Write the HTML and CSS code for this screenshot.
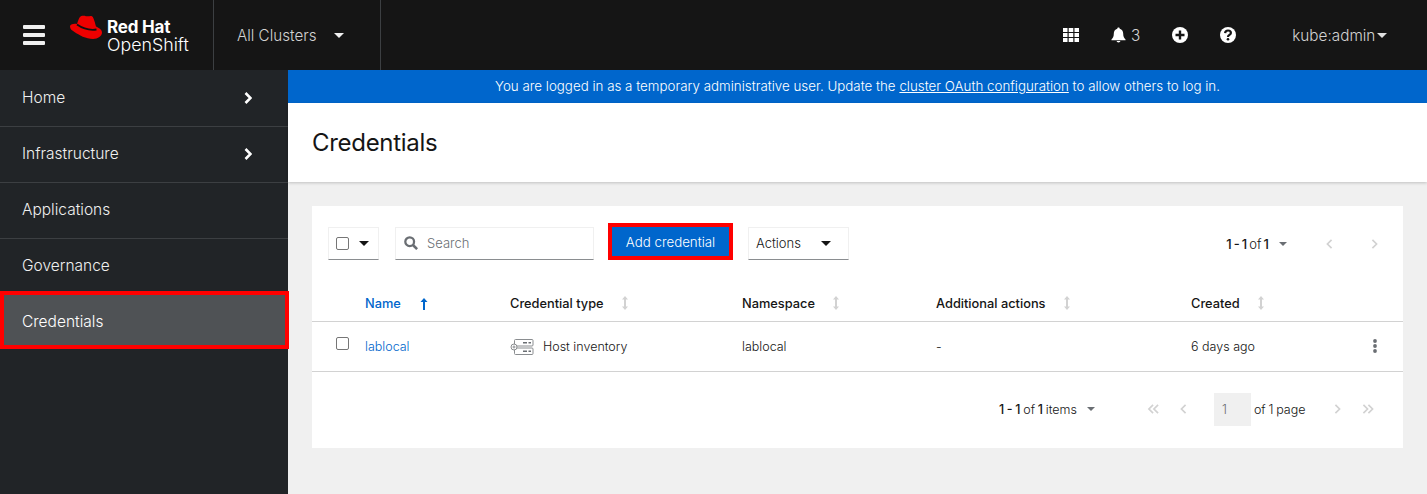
FILE: index.html
```html
<!DOCTYPE html>
<html lang="en">
<head>
<meta charset="utf-8">
<title>Credentials</title>
<link rel="stylesheet" href="styles.css">
</head>
<body>
<header class="masthead">
  <button class="burger" aria-label="Menu"><span></span><span></span><span></span></button>
  <div class="brand">
    <svg class="hat" viewBox="0 0 32 24" width="32" height="24"><path fill="#e00" d="M7 9C8 6 9 3 10 2c1-1.500 4-1.500 6-.8 2 .6 4-.7 5.500-.2 2 .6 3 5 4.500 10.500 3 1.500 6 3 6 6 0 3.500-4 6.500-9 6.500C16 24 9 20 4.500 17 2 15.500 0 14 0 11.500 0 9.500 3 8.500 7 9z"/><path fill="none" stroke="#111" stroke-width="1.800" d="M7 9.500c5 3.500 13 6 19.500 5"/></svg>
    <div class="brand-text"><b>Red Hat</b><span>OpenShift</span></div>
  </div>
  <div class="cluster"><span>All Clusters</span><i class="caret caret-lg"></i></div>
  <div class="tools">
    <svg class="grid-ico" viewBox="0 0 16 16" width="16" height="16"><path fill="#fff" d="M0 1h4.500v4H0zM5.700 1h4.600v4H5.700zM11.500 1H16v4h-4.500zM0 6h4.500v4H0zM5.700 6h4.600v4H5.700zM11.500 6H16v4h-4.500zM0 11h4.500v4H0zM5.700 11h4.600v4H5.700zM11.500 11H16v4h-4.500z"/></svg>
    <div class="bell"><svg viewBox="0 0 16 16" width="15" height="16"><path fill="#fff" d="M8 0c.8 0 1.300.5 1.300 1.200C11.800 1.800 13 4 13 6.500c0 3 .8 4.600 2.500 6.300v.9H.5v-.9C2.200 11.100 3 9.500 3 6.500 3 4 4.200 1.800 6.700 1.200 6.700.5 7.200 0 8 0zM6 14.500h4C10 15.400 9.100 16 8 16s-2-.6-2-1.500z"/></svg><span>3</span></div>
    <svg class="round-ico" viewBox="0 0 16 16" width="16" height="16"><circle cx="8" cy="8" r="8" fill="#fff"/><path fill="#151515" d="M6.800 3.500h2.400v3.300h3.300v2.400H9.200v3.300H6.800V9.200H3.500V6.800h3.300z"/></svg>
    <svg class="round-ico help" viewBox="0 0 16 16" width="16" height="16"><circle cx="8" cy="8" r="8" fill="#fff"/><path fill="none" stroke="#151515" stroke-width="2.200" d="M5.100 6.100C5.200 4.400 6.400 3.500 8 3.500s2.900.9 2.900 2.400c0 2.100-2.900 1.900-2.900 4"/><circle cx="8" cy="12.300" r="1.300" fill="#151515"/></svg>
    <div class="user"><span>kube:admin</span><i class="caret"></i></div>
  </div>
</header>
<div class="shell">
  <nav class="sidebar">
    <a class="nav-item"><span>Home</span><svg class="chev" viewBox="0 0 8 12" width="8" height="12"><path fill="none" stroke="#fff" stroke-width="2.600" d="M1.500 1l5 5-5 5"/></svg></a>
    <a class="nav-item"><span>Infrastructure</span><svg class="chev" viewBox="0 0 8 12" width="8" height="12"><path fill="none" stroke="#fff" stroke-width="2.600" d="M1.500 1l5 5-5 5"/></svg></a>
    <a class="nav-item"><span>Applications</span></a>
    <a class="nav-item"><span>Governance</span></a>
    <a class="nav-item current"><span>Credentials</span></a>
  </nav>
  <main class="content">
    <div class="banner">You are logged in as a temporary administrative user. Update the <a>cluster OAuth configuration</a> to allow others to log in.</div>
    <div class="title-bar"><h1>Credentials</h1></div>
    <section class="card">
      <div class="toolbar">
        <div class="select-box"><i class="check"></i><i class="caret caret-dark"></i></div>
        <div class="search">
          <svg viewBox="0 0 16 16" width="14" height="14"><circle cx="6.500" cy="6.500" r="5" fill="none" stroke="#6a6e73" stroke-width="2.600"/><path stroke="#6a6e73" stroke-width="3" d="M10 10l5 5"/></svg>
          <span>Search</span>
        </div>
        <div class="highlight"><button class="primary">Add credential</button></div>
        <div class="actions"><span>Actions</span><i class="caret caret-dark"></i></div>
        <div class="top-pager">
          <span class="count"><b>1 - 1</b> of <b>1</b></span><i class="caret caret-small"></i>
          <svg class="pg first-pg" viewBox="0 0 8 12" width="7" height="10"><path fill="none" stroke="#d2d2d2" stroke-width="2" d="M6.500 1l-5 5 5 5"/></svg>
          <svg class="pg" viewBox="0 0 8 12" width="7" height="10"><path fill="none" stroke="#d2d2d2" stroke-width="2" d="M1.500 1l5 5-5 5"/></svg>
        </div>
      </div>
      <table class="table">
        <thead>
          <tr>
            <th class="c-check"></th>
            <th class="c-name sorted">Name <svg class="sort up" viewBox="0 0 8 12" width="8" height="12"><path fill="#06c" d="M4 0l3.500 4H5v8H3V4H.5z"/></svg></th>
            <th class="c-type">Credential type <svg class="sort" viewBox="0 0 8 14" width="8" height="14"><path fill="#d2d2d2" d="M4 0l3 3.500H5v7h2L4 14l-3-3.500h2v-7H1z"/></svg></th>
            <th class="c-ns">Namespace <svg class="sort" viewBox="0 0 8 14" width="8" height="14"><path fill="#d2d2d2" d="M4 0l3 3.500H5v7h2L4 14l-3-3.500h2v-7H1z"/></svg></th>
            <th class="c-add">Additional actions <svg class="sort" viewBox="0 0 8 14" width="8" height="14"><path fill="#d2d2d2" d="M4 0l3 3.500H5v7h2L4 14l-3-3.500h2v-7H1z"/></svg></th>
            <th class="c-created">Created <svg class="sort" viewBox="0 0 8 14" width="8" height="14"><path fill="#d2d2d2" d="M4 0l3 3.500H5v7h2L4 14l-3-3.500h2v-7H1z"/></svg></th>
            <th class="c-menu"></th>
          </tr>
        </thead>
        <tbody>
          <tr>
            <td class="c-check"><i class="check raised"></i></td>
            <td><a class="link">lablocal</a></td>
            <td><div class="type-cell">
              <svg viewBox="0 0 24 18" width="24" height="18"><g fill="none" stroke="#8a8d90"><rect x="4.500" y="1.500" width="18.500" height="6.500" rx="1"/><rect x="4.500" y="10" width="18.500" height="6.500" rx="1"/><circle cx="4" cy="9" r="3" fill="#fff"/><circle cx="4" cy="9" r="1"/></g><path stroke="#6a6e73" stroke-width="1.500" d="M13 4.800h4M18.500 4.800h2.500M13 13.300h4M18.500 13.300h2.500"/></svg>
              <span>Host inventory</span></div></td>
            <td>lablocal</td>
            <td>-</td>
            <td>6 days ago</td>
            <td class="c-menu"><svg viewBox="0 0 4 14" width="4" height="14"><g fill="#6a6e73"><circle cx="2" cy="2" r="1.900"/><circle cx="2" cy="7" r="1.900"/><circle cx="2" cy="12" r="1.900"/></g></svg></td>
          </tr>
        </tbody>
      </table>
      <div class="bottom-pager">
        <span class="count"><b>1 - 1</b> of <b>1</b> items</span><i class="caret caret-small"></i>
        <svg class="dbl-left" viewBox="0 0 14 12" width="13" height="10"><path fill="none" stroke="#d2d2d2" stroke-width="2" d="M6.500 1l-5 5 5 5M12.500 1l-5 5 5 5"/></svg>
        <svg class="pg-left" viewBox="0 0 8 12" width="7" height="10"><path fill="none" stroke="#d2d2d2" stroke-width="2" d="M6.500 1l-5 5 5 5"/></svg>
        <span class="page-box">1</span>
        <span class="of-page">of 1 page</span>
        <svg class="pg-right" viewBox="0 0 8 12" width="7" height="10"><path fill="none" stroke="#d2d2d2" stroke-width="2" d="M1.500 1l5 5-5 5"/></svg>
        <svg class="dbl-right" viewBox="0 0 14 12" width="12" height="10"><path fill="none" stroke="#d2d2d2" stroke-width="2" d="M1.500 1l5 5-5 5M7.500 1l5 5-5 5"/></svg>
      </div>
    </section>
  </main>
</div>
</body>
</html>
```
FILE: styles.css
```css
* { box-sizing: border-box; }
html, body { height: 100%; }
body {
  margin: 0;
  height: 494px;
  overflow: hidden;
  background: #f0f0f0;
  color: #151515;
  font-family: Inter, "Liberation Sans", sans-serif;
  font-size: 13px;
}
i { display: block; }
.caret {
  width: 0; height: 0;
  border-left: 5px solid transparent;
  border-right: 5px solid transparent;
  border-top: 5px solid #e0e0e0;
}
.caret-lg { border-top-color: #f0f0f0; }
.caret-dark { border-top-color: #151515; }
.caret-small { border-left-width: 4.500px; border-right-width: 4.500px; border-top: 4px solid #6a6e73; }

.masthead {
  height: 70px;
  background: #151515;
  display: flex;
  align-items: stretch;
  color: #d2d2d2;
}
.burger {
  width: 70px;
  padding: 0 0 0 23px;
  margin: 0;
  background: none;
  border: 0;
  display: flex;
  flex-direction: column;
  justify-content: center;
  gap: 4px;
}
.burger span { display: block; width: 22px; height: 4px; background: #f0f0f0; border-radius: 1px; }
.brand { width: 144px; display: flex; align-items: flex-start; padding-top: 15px; border-right: 1px solid #3c3f42; }
.hat { flex: none; }
.brand-text { display: flex; flex-direction: column; margin: 3px 0 0 5px; color: #fff; line-height: 18px; }
.brand-text b { font-size: 17px; font-weight: 700; letter-spacing: -0.2px; }
.brand-text span { font-size: 17.800px; font-weight: 300; }
.cluster {
  width: 167px;
  display: flex;
  align-items: center;
  gap: 18px;
  padding-left: 23px;
  border-right: 1px solid #3c3f42;
  font-size: 15.200px;
  font-weight: 300;
}
.tools { flex: 1; display: flex; align-items: center; padding-left: 682px; }
.bell { display: flex; align-items: center; gap: 5px; margin-left: 32px; font-size: 15.300px; font-weight: 300; }
.round-ico { margin-left: 32px; }
.help { margin-left: 32px; }
.user { display: flex; align-items: center; gap: 2px; margin-left: 56px; font-size: 15.300px; font-weight: 300; }

.shell { display: flex; height: 424px; }
.sidebar { width: 288px; flex: none; padding-top: 1px; background: #212427; color: #f0f0f0; }
.nav-item {
  height: 56px;
  display: flex;
  align-items: center;
  justify-content: space-between;
  padding: 0 36px 0 22px;
  border-bottom: 1px solid #3c3f42;
  font-size: 15.500px;
  font-weight: 300;
}
.nav-item span { position: relative; top: -1px; }
.chev { margin-bottom: 2px; }
.nav-item.current {
  height: 58px;
  margin: -4px -1px 0 0;
  position: relative;
  background: #4f5255;
  border: 4px solid #f00;
  padding-left: 18px;
  color: #fff;
}
.nav-item.current span { top: 1px; }

.content { flex: 1; min-width: 0; }
.banner {
  height: 33px;
  padding-bottom: 1px;
  background: #06c;
  color: #fff;
  display: flex;
  align-items: center;
  justify-content: center;
  font-size: 13.350px;
  font-weight: 300;
  white-space: pre;
}
.banner a { text-decoration: underline; }
.title-bar {
  height: 79px;
  background: #fff;
  padding: 0 24px;
  display: flex;
  align-items: center;
  box-shadow: 0 1px 3px rgba(3, 3, 3, .2);
}
h1 { margin: 0; font-size: 24px; font-weight: 400; letter-spacing: -0.3px; }
.card { margin: 24px 24px 0; height: 242px; background: #fff; }
.toolbar { height: 79px; padding: 21px 16px 0; display: flex; align-items: flex-start; }
.select-box, .search, .actions {
  height: 33px;
  padding-bottom: 1px;
  border: 1px solid #f0f0f0;
  border-bottom-color: #8a8d90;
  display: flex;
  align-items: center;
}
.select-box { width: 51px; padding-left: 7px; gap: 10px; }
.check { width: 13px; height: 13px; border: 1px solid #767676; border-radius: 2px; background: #fff; }
.check.raised { position: relative; top: -3px; }
.search { width: 199px; margin-left: 16px; padding-left: 8px; gap: 9px; color: #6a6e73; font-size: 13px; font-weight: 300; }
.highlight { margin: -4px 0 0 14px; border: 4px solid #f00; height: 37px; }
.primary {
  height: 29px;
  width: 117px;
  padding: 1px 0 0;
  background: #06c;
  color: #fff;
  border: 0;
  font: inherit;
  font-size: 13.300px;
  font-weight: 300;
}
.actions { width: 101px; margin-left: 15px; padding: 0 17px 1px 7px; justify-content: space-between; font-size: 13px; font-weight: 300; }
.top-pager { margin-left: auto; height: 33px; display: flex; align-items: center; font-size: 13px; font-weight: 300; padding-right: 9px; word-spacing: -1.500px; }
.count b { font-weight: 500; }
.top-pager .caret-small { margin-left: 10px; }
.first-pg { margin: 0 38px 0 39px; }

.table { width: 100%; border-collapse: collapse; table-layout: fixed; font-size: 12.500px; font-weight: 300; }
th { height: 36px; padding: 1px 0 0; text-align: left; font-size: 12.800px; font-weight: 500; border-bottom: 1px solid #d2d2d2; }
td { height: 50px; padding: 1px 0 0; border-bottom: 1px solid #d2d2d2; }
.c-check { width: 53px; padding-left: 24px; }
.c-name { width: 145px; }
.c-type { width: 232px; }
.c-ns { width: 194px; }
.c-add { width: 255px; }
.c-created { width: 170px; }
.c-menu { text-align: center; padding: 0 14px 1px 0; }
.c-menu svg { display: inline-block; vertical-align: middle; }
.sorted { color: #06c; }
.sort { margin-left: 14px; vertical-align: -2px; }
.sort.up { margin-left: 16px; }
.link { color: #06c; }
.type-cell { display: flex; align-items: center; gap: 9px; }

.bottom-pager { height: 75px; display: flex; align-items: center; padding-left: 687px; font-size: 12.500px; font-weight: 300; word-spacing: -0.700px; }
.bottom-pager .caret-small { margin-left: 10px; }
.dbl-left { margin-left: 52px; }
.pg-left { margin-left: 20px; }
.page-box { width: 37px; height: 33px; margin-left: 27px; padding-left: 8px; background: #f0f0f0; color: #6a6e73; display: flex; align-items: center; }
.of-page { margin-left: 3px; }
.pg-right { margin-left: 28px; }
.dbl-right { margin-left: 21px; }
```
